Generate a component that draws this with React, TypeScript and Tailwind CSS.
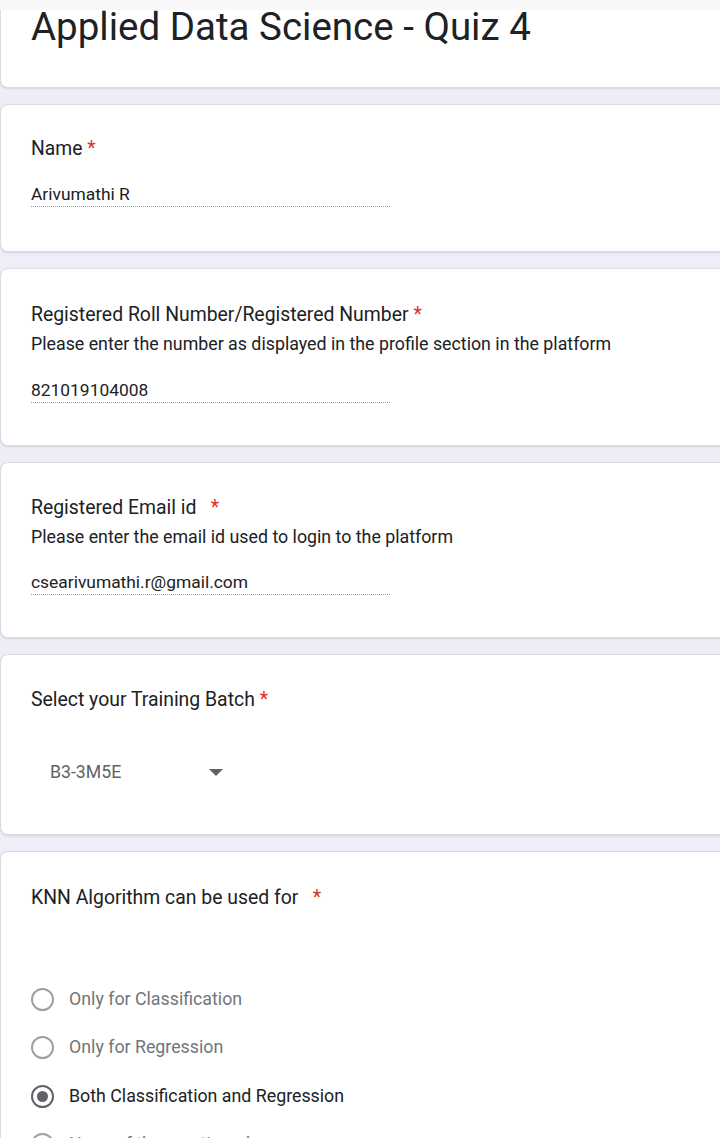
import React from "react";

function Required() {
  return <span className="text-[#d93025]">*</span>;
}

function Card({ children, className }: { children: React.ReactNode; className?: string }) {
  return (
    <div
      className={
        "w-[760px] bg-white rounded-lg border border-[#dadce0] shadow-[0_1px_2px_rgba(60,64,67,0.15)] pl-[30px] " +
        (className || "")
      }
    >
      {children}
    </div>
  );
}

function TextAnswer({ value }: { value: string }) {
  return (
    <div className="w-[359px] border-b border-dotted border-[#9aa0a6] h-[25px] leading-[24px] text-[17.4px] text-[#202124]">
      {value}
    </div>
  );
}

function Radio({ label, checked }: { label: string; checked?: boolean }) {
  return (
    <div className="flex items-center h-[48.5px]">
      <div
        className={
          "w-[23px] h-[23px] rounded-full border-2 flex items-center justify-center " +
          (checked ? "border-[#5f6368]" : "border-[#a0a0a0]")
        }
      >
        {checked && <div className="w-[11px] h-[11px] rounded-full bg-[#5f6368]" />}
      </div>
      <span className={"ml-[15px] text-[17.8px] " + (checked ? "text-[#202124]" : "text-[#70757a]")}>
        {label}
      </span>
    </div>
  );
}

export default function App() {
  return (
    <div
      className="relative w-[720px] h-[1138px] overflow-hidden bg-[#efedf8]"
      style={{ fontFamily: "Roboto, 'Liberation Sans', sans-serif" }}
    >
      <div className="absolute top-0 left-0 right-0 h-[10px] bg-[#f8f8f8] z-10" />

      <div className="flex flex-col gap-4">
        <Card className="h-[89px] -mt-[1px] pt-[7px]">
          <h1 className="text-[38.5px] leading-[40px] text-[#202124]">Applied Data Science - Quiz 4</h1>
        </Card>

        <Card className="pt-[32px] pb-[44px]">
          <div className="text-[19.3px] leading-[24px] text-[#202124]">
            Name <Required />
          </div>
          <div className="mt-[21px]">
            <TextAnswer value="Arivumathi R" />
          </div>
        </Card>

        <Card className="pt-[34px] pb-[42px]">
          <div className="text-[19.4px] leading-[24px] text-[#202124]">
            Registered Roll Number/Registered Number <Required />
          </div>
          <div className="mt-[5px] text-[17.8px] leading-[24px] text-[#202124]">
            Please enter the number as displayed in the profile section in the platform
          </div>
          <div className="mt-[22px]">
            <TextAnswer value="821019104008" />
          </div>
        </Card>

        <Card className="pt-[33px] pb-[42px]">
          <div className="text-[19.4px] leading-[24px] text-[#202124]">
            Registered Email id&nbsp;&nbsp; <Required />
          </div>
          <div className="mt-[5px] text-[17.8px] leading-[24px] text-[#202124]">
            Please enter the email id used to login to the platform
          </div>
          <div className="mt-[21px]">
            <TextAnswer value="csearivumathi.r@gmail.com" />
          </div>
        </Card>

        <Card className="pt-[33px] pb-[38px]">
          <div className="text-[19.4px] leading-[24px] text-[#202124]">
            Select your Training Batch <Required />
          </div>
          <div className="mt-[36px] h-[48px] w-[192px] flex items-center justify-between pl-[19px]">
            <span className="text-[17.7px] text-[#5f6368]">B3-3M5E</span>
            <svg width="14" height="7" viewBox="0 0 14 7">
              <path d="M0 0 L14 0 L7 7 Z" fill="#5f6368" />
            </svg>
          </div>
        </Card>

        <Card className="pt-[34px] pb-[40px]">
          <div className="text-[19.4px] leading-[24px] text-[#202124]">
            KNN Algorithm can be used for&nbsp;&nbsp; <Required />
          </div>
          <div className="mt-[65px] flex flex-col">
            <Radio label="Only for Classification" />
            <Radio label="Only for Regression" />
            <Radio label="Both Classification and Regression" checked />
            <Radio label="None of the mentioned" />
          </div>
        </Card>
      </div>
    </div>
  );
}
